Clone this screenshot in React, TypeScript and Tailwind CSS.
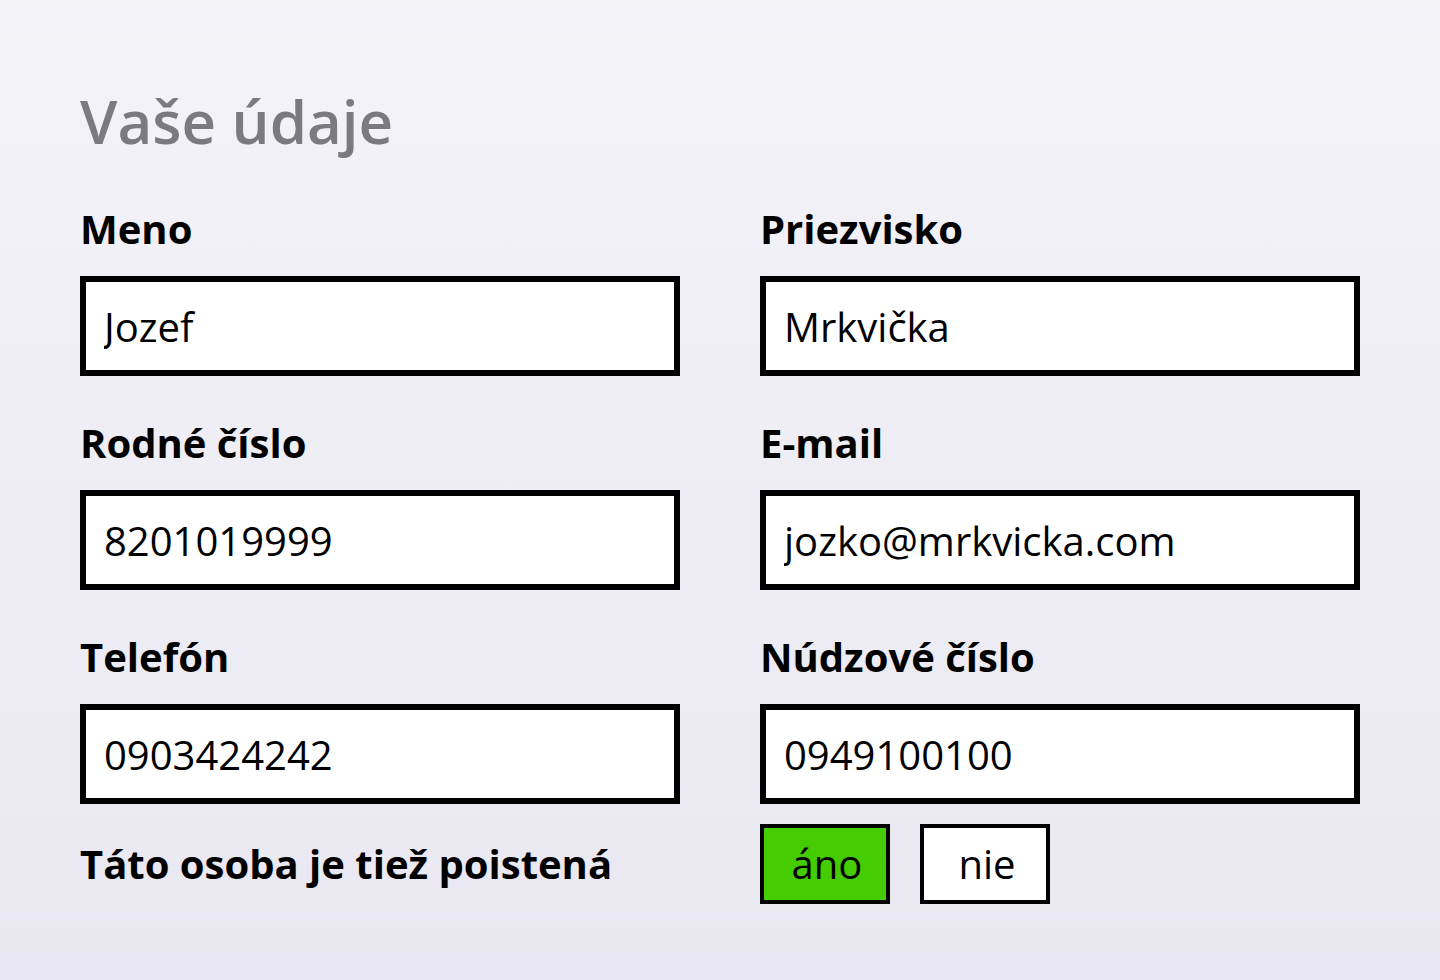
const fields = [
  { label: 'Meno', value: 'Jozef' },
  { label: 'Priezvisko', value: 'Mrkvička' },
  { label: 'Rodné číslo', value: '8201019999' },
  { label: 'E-mail', value: 'jozko@mrkvicka.com' },
  { label: 'Telefón', value: '0903424242' },
  { label: 'Núdzové číslo', value: '0949100100' }
];

export default function App() {
  return (
    <div
      className="min-h-[980px] bg-gradient-to-b from-[#f4f3f8] to-[#e9e7f1] px-20 pt-[91px]"
      style={{ fontFamily: '"Open Sans", "Noto Sans", sans-serif' }}
    >
      <h1 className="text-[60px] leading-none font-semibold text-[#7b7b7f]">Vaše údaje</h1>

      {/* Fields */}
      <div className="mt-[58px] grid grid-cols-2 gap-x-20 gap-y-[47px]">
        {fields.map((f) => (
          <div key={f.label}>
            <label className="block text-[40px] leading-none font-bold text-black mb-[27px]">
              {f.label}
            </label>
            <input
              readOnly
              value={f.value}
              className="block w-full h-[100px] border-[6px] border-black bg-white px-[18px] text-[40px] text-black outline-none"
            />
          </div>
        ))}
      </div>

      {/* Insured toggle */}
      <div className="mt-5 grid grid-cols-2 gap-x-20 items-center">
        <div className="text-[40px] leading-none font-bold text-black">Táto osoba je tiež poistená</div>
        <div className="flex gap-[30px]">
          <button className="w-[130px] h-20 border-4 border-black bg-[#44cc00] pl-1 text-[40px] leading-none text-black">
            áno
          </button>
          <button className="w-[130px] h-20 border-4 border-black bg-white pl-1 text-[40px] leading-none text-black">
            nie
          </button>
        </div>
      </div>
    </div>
  );
}
